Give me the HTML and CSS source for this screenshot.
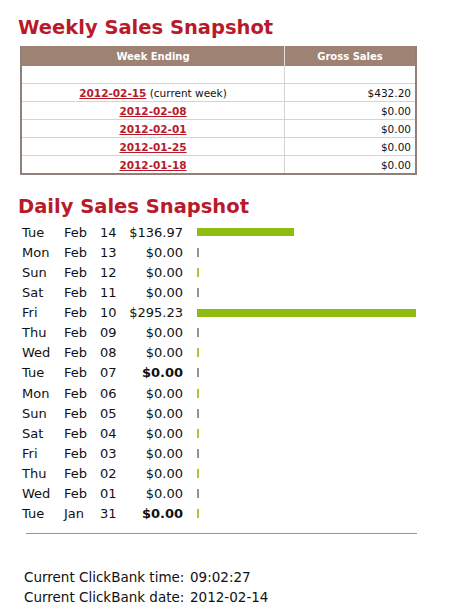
FILE: index.html
```html
<!DOCTYPE html>
<html>
<head>
    <title>Sales Snapshot</title>
    <meta charset="UTF-8">
    <link rel="stylesheet" href="styles.css">
</head>
<body>
    <div class="page">
        <h1 class="heading">Weekly Sales Snapshot</h1>
        <table class="weekly">
            <thead>
                <tr>
                    <th class="col-week">Week Ending</th>
                    <th class="col-gross">Gross Sales</th>
                </tr>
            </thead>
            <tbody>
                <tr class="blank"><td></td><td></td></tr>
                <tr>
                    <td class="week"><a href="#">2012-02-15</a> (current week)</td>
                    <td class="gross">$432.20</td>
                </tr>
                <tr>
                    <td class="week"><a href="#">2012-02-08</a></td>
                    <td class="gross">$0.00</td>
                </tr>
                <tr>
                    <td class="week"><a href="#">2012-02-01</a></td>
                    <td class="gross">$0.00</td>
                </tr>
                <tr>
                    <td class="week"><a href="#">2012-01-25</a></td>
                    <td class="gross">$0.00</td>
                </tr>
                <tr>
                    <td class="week"><a href="#">2012-01-18</a></td>
                    <td class="gross">$0.00</td>
                </tr>
            </tbody>
        </table>

        <h1 class="heading daily-heading">Daily Sales Snapshot</h1>
        <div class="daily" id="daily"></div>

        <hr class="rule">

        <div class="clock">
            <div class="clock-row"><span class="clock-label">Current ClickBank time:</span><span>09:02:27</span></div>
            <div class="clock-row"><span class="clock-label">Current ClickBank date:</span><span>2012-02-14</span></div>
        </div>
    </div>

    <script>
        // day, month, date, amount, bold, bar width
        const days = [
            ['Tue', 'Feb', '14', 136.97, false, 97],
            ['Mon', 'Feb', '13', 0, false, 0],
            ['Sun', 'Feb', '12', 0, false, 0],
            ['Sat', 'Feb', '11', 0, false, 0],
            ['Fri', 'Feb', '10', 295.23, false, 219],
            ['Thu', 'Feb', '09', 0, false, 0],
            ['Wed', 'Feb', '08', 0, false, 0],
            ['Tue', 'Feb', '07', 0, true, 0],
            ['Mon', 'Feb', '06', 0, false, 0],
            ['Sun', 'Feb', '05', 0, false, 0],
            ['Sat', 'Feb', '04', 0, false, 0],
            ['Fri', 'Feb', '03', 0, false, 0],
            ['Thu', 'Feb', '02', 0, false, 0],
            ['Wed', 'Feb', '01', 0, false, 0],
            ['Tue', 'Jan', '31', 0, true, 0]
        ];

        const daily = document.getElementById('daily');

        days.forEach(([day, month, date, amount, bold, width], i) => {
            const row = document.createElement('div');
            row.className = 'day-row';
            let bar;
            if (width > 0) {
                bar = `<span class="bar" style="width:${width}px"></span>`;
            } else {
                bar = `<span class="tick ${i % 2 ? 'grey' : 'green'}"></span>`;
            }
            row.innerHTML = `
                <span>${day}</span>
                <span>${month}</span>
                <span>${date}</span>
                <span class="amount${bold ? ' bold' : ''}">$${amount.toFixed(2)}</span>
                <span class="bar-cell">${bar}</span>
            `;
            daily.appendChild(row);
        });
    </script>
</body>
</html>
```

FILE: styles.css
```css
body {
    margin: 0;
    background: #fff;
    font-family: "DejaVu Sans", Verdana, sans-serif;
    color: #111;
}
.page {
    padding: 16px 0 0 18px;
    width: 400px;
}
.heading {
    margin: 0;
    font-size: 19.5px;
    font-weight: bold;
    color: #b81a2a;
    line-height: 24px;
}
.weekly {
    margin: 6px 0 0 2px;
    width: 397px;
    border-collapse: collapse;
    border: 2px solid #8f807a;
    border-top: none;
    font-size: 10.5px;
}
.weekly th {
    background: #9e8274;
    color: #fff;
    font-size: 10px;
    font-weight: bold;
    height: 20px;
    padding: 0;
    text-align: center;
}
.weekly th.col-week {
    width: 262px;
    border-right: 1px solid #e8dfdb;
}
.weekly td {
    height: 17px;
    padding: 0 4px;
    border-top: 1px solid #d4d4d4;
}
.weekly td:first-child {
    border-right: 1px solid #d4d4d4;
}
.weekly .blank td {
    height: 17px;
    border-top: none;
}
.week {
    text-align: center;
}
.week a {
    color: #b81a2a;
    font-weight: bold;
    text-decoration: underline;
}
.gross {
    text-align: right;
}
.daily-heading {
    margin-top: 20px;
}
.daily {
    margin: 3px 0 0 4px;
    font-size: 13px;
}
.day-row {
    display: grid;
    grid-template-columns: 42px 36px 28px 55px 240px;
    align-items: center;
    height: 20.14px;
}
.amount {
    text-align: right;
}
.amount.bold {
    font-weight: bold;
}
.bar-cell {
    display: flex;
    align-items: center;
    padding-left: 14px;
}
.bar {
    display: block;
    height: 8px;
    background: #8ebc10;
}
.tick {
    display: block;
    width: 2px;
    height: 9px;
}
.tick.grey {
    background: #9a9090;
}
.tick.green {
    background: #a4c83a;
}
.rule {
    margin: 9px 0 0 8px;
    width: 391px;
    border: none;
    border-top: 1px solid #a29382;
}
.clock {
    margin: 33px 0 0 6px;
    font-size: 13.5px;
}
.clock-row {
    display: flex;
    height: 20px;
    align-items: center;
}
.clock-label {
    width: 166px;
}
```
